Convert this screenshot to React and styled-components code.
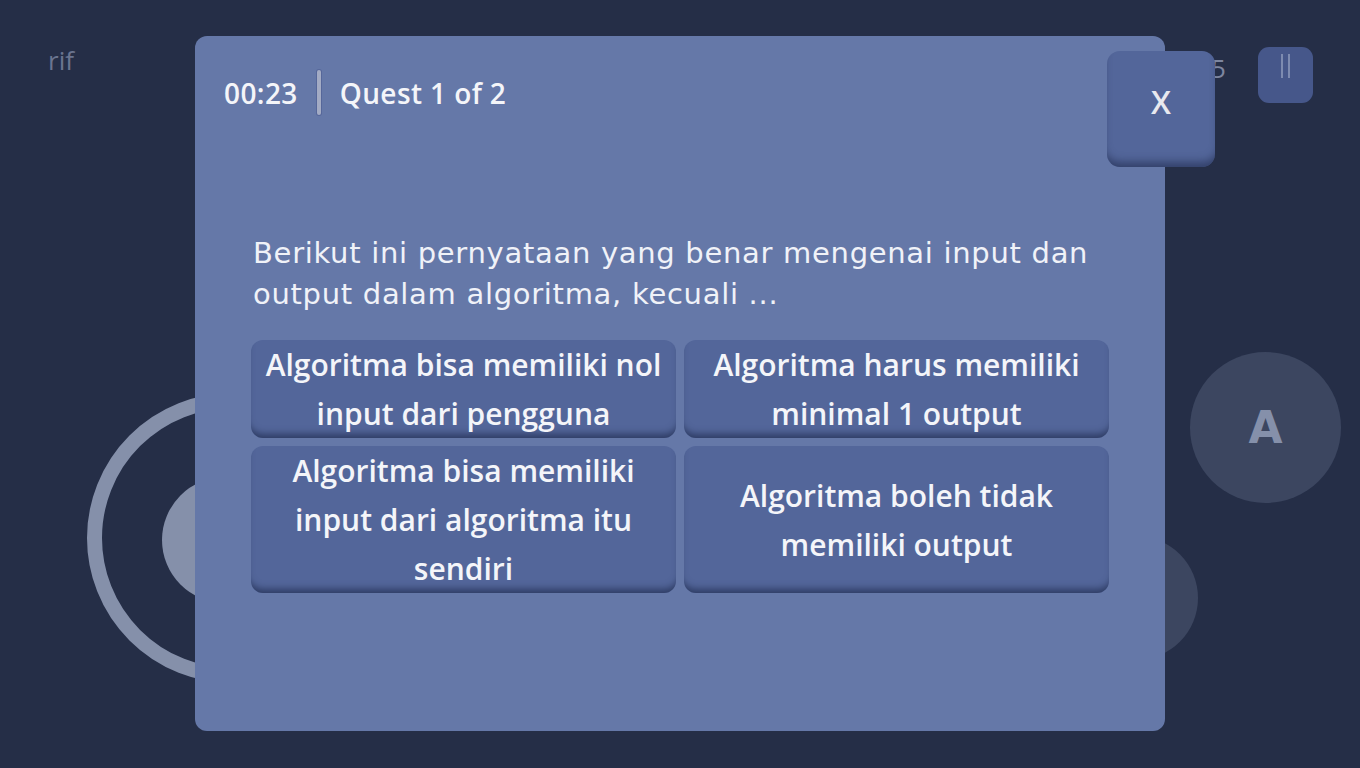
import styled, { createGlobalStyle } from "styled-components";

const Global = createGlobalStyle`
  html, body {
    margin: 0;
    padding: 0;
    background: #252e47;
    overflow: hidden;
  }
`;

const Screen = styled.div`
  position: relative;
  width: 1360px;
  height: 768px;
  background: #252e47;
  font-family: "Open Sans", "Noto Sans", sans-serif;
  overflow: hidden;
`;

/* game hud behind the modal */
const PlayerName = styled.div`
  position: absolute;
  left: 48px;
  top: 42px;
  font-size: 26px;
  color: #6b7590;
`;

const Score = styled.div`
  position: absolute;
  left: 1211px;
  top: 50px;
  font-size: 26px;
  color: #7d86a0;
`;

const PauseButton = styled.div`
  position: absolute;
  left: 1258px;
  top: 47px;
  width: 55px;
  height: 56px;
  border-radius: 11px;
  background: #46578a;
  display: flex;
  justify-content: center;
  gap: 5px;
  padding-top: 7px;
  box-sizing: border-box;
`;

const PauseBar = styled.span`
  width: 2px;
  height: 24px;
  background: #7d8bb0;
`;

const JoyRing = styled.div`
  position: absolute;
  left: 87px;
  top: 393px;
  width: 290px;
  height: 290px;
  border-radius: 50%;
  border: 15px solid #8590aa;
  box-sizing: border-box;
`;

const JoyKnob = styled.div`
  position: absolute;
  left: 162px;
  top: 477px;
  width: 126px;
  height: 126px;
  border-radius: 50%;
  background: #8590aa;
`;

const RoundKey = styled.div`
  position: absolute;
  left: ${(p) => p.$x}px;
  top: ${(p) => p.$y}px;
  width: ${(p) => p.$size}px;
  height: ${(p) => p.$size}px;
  border-radius: 50%;
  background: #3c4660;
  color: #8590aa;
  font-family: "DejaVu Sans", sans-serif;
  font-weight: 700;
  font-size: 44px;
  display: flex;
  align-items: center;
  justify-content: center;
`;

/* modal */
const Overlay = styled.div`
  position: absolute;
  inset: 0;
  display: flex;
  align-items: center;
  justify-content: center;
`;

const Panel = styled.div`
  position: relative;
  width: 970px;
  height: 695px;
  margin-top: -1px;
  background: #6578a8;
  border-radius: 12px;
  padding: 34px 56px 0 29px;
  box-sizing: border-box;
  color: #f4f5f9;
`;

const Header = styled.div`
  display: flex;
  align-items: center;
  gap: 19px;
  height: 45px;
  font-size: 28px;
  font-weight: 600;
  letter-spacing: 0.4px;
`;

const Divider = styled.span`
  width: 4px;
  height: 45px;
  border-radius: 2px;
  background: #a3abc4;
  box-shadow: 0 0 0 1px #56679a;
`;

const CloseButton = styled.button`
  position: absolute;
  left: 912px;
  top: 15px;
  width: 108px;
  height: 116px;
  border: none;
  border-radius: 13px;
  background: #53669a;
  box-shadow: inset 0 -9px 8px -4px rgba(40, 52, 90, 0.75);
  color: #e8e9ef;
  font-family: "Open Sans", sans-serif;
  font-size: 32px;
  font-weight: 600;
  padding: 0 0 16px;
  cursor: pointer;
`;

const Body = styled.div`
  padding-left: 27px;
  margin-top: 118px;
`;

const Question = styled.p`
  margin: 0 0 25px 2px;
  font-family: "DejaVu Sans", sans-serif;
  font-weight: 400;
  font-size: 29px;
  line-height: 41px;
  color: #f0f2f8;
  letter-spacing: 0.7px;
`;

const Answers = styled.div`
  display: grid;
  grid-template-columns: 425px 425px;
  gap: 8px;
`;

const Answer = styled.button`
  display: flex;
  align-items: center;
  justify-content: center;
  border: none;
  border-radius: 12px;
  background: #53669a;
  box-shadow: inset 0 -8px 7px -4px rgba(38, 50, 88, 0.8);
  color: #f4f5f9;
  font-family: "Open Sans", sans-serif;
  font-weight: 600;
  font-size: 30px;
  line-height: 49px;
  text-align: center;
  padding: 0 10px;
  cursor: pointer;
`;

const answers = [
  "Algoritma bisa memiliki nol input dari pengguna",
  "Algoritma harus memiliki minimal 1 output",
  "Algoritma bisa memiliki input dari algoritma itu sendiri",
  "Algoritma boleh tidak memiliki output",
];

export default function App() {
  return (
    <Screen>
      <Global />
      <PlayerName>rif</PlayerName>
      <Score>5</Score>
      <PauseButton>
        <PauseBar />
        <PauseBar />
      </PauseButton>
      <JoyRing />
      <JoyKnob />
      <RoundKey $x={1190} $y={352} $size={151}>
        A
      </RoundKey>
      <RoundKey $x={1074} $y={536} $size={124} />

      <Overlay>
        <Panel>
          <Header>
            <span>00:23</span>
            <Divider />
            <span>Quest 1 of 2</span>
          </Header>
          <CloseButton>X</CloseButton>
          <Body>
            <Question>
              Berikut ini pernyataan yang benar mengenai input dan output dalam
              algoritma, kecuali ...
            </Question>
            <Answers>
              {answers.map((a) => (
                <Answer key={a}>{a}</Answer>
              ))}
            </Answers>
          </Body>
        </Panel>
      </Overlay>
    </Screen>
  );
}
